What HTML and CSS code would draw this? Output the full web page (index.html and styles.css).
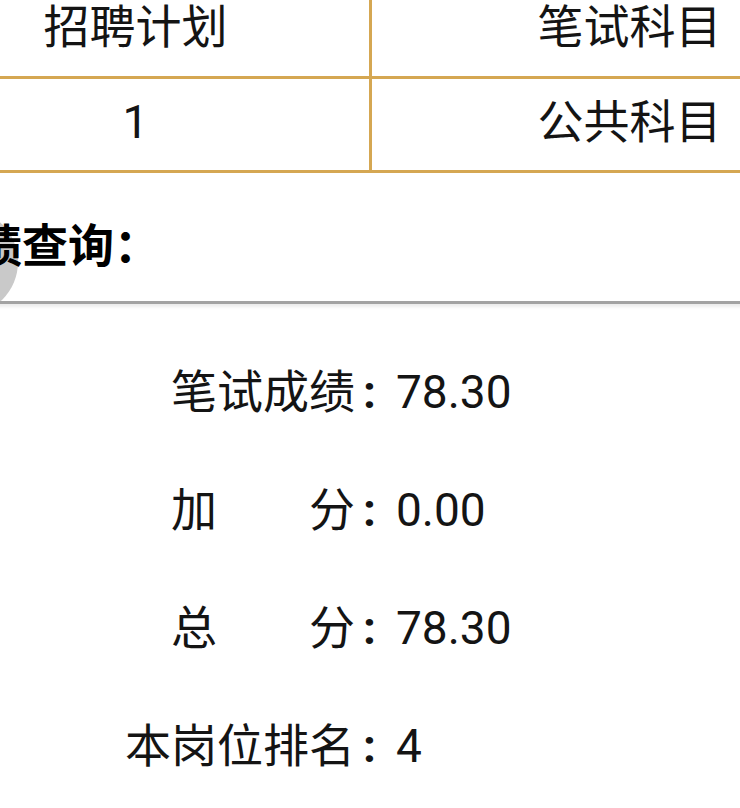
FILE: index.html
```html
<!DOCTYPE html>
<html lang="zh-CN">
<head>
<meta charset="utf-8">
<title>成绩查询</title>
<link rel="stylesheet" href="styles.css">
</head>
<body>
<div class="sheet">
  <table class="plan-table">
    <tr class="plan-head">
      <td class="col-plan">招聘计划</td>
      <td class="col-subject">笔试科目</td>
    </tr>
    <tr class="plan-row">
      <td class="col-plan">1</td>
      <td class="col-subject">公共科目</td>
    </tr>
  </table>

  <section class="query-head">
    <span class="float-btn"></span>
    <h2 class="query-title">成绩查询：</h2>
  </section>

  <ul class="scores">
    <li class="score-row"><span class="label">笔试成绩</span><span class="colon">:</span><span class="value">78.30</span></li>
    <li class="score-row"><span class="label">加　　分</span><span class="colon">:</span><span class="value">0.00</span></li>
    <li class="score-row"><span class="label">总　　分</span><span class="colon">:</span><span class="value">78.30</span></li>
    <li class="score-row"><span class="label">本岗位排名</span><span class="colon">:</span><span class="value">4</span></li>
  </ul>
</div>
</body>
</html>
```

FILE: styles.css
```css
html, body {
  margin: 0;
  padding: 0;
  background: #ffffff;
  overflow: hidden;
}

body {
  width: 740px;
  height: 808px;
  font-family: Roboto, "Noto Sans CJK SC", sans-serif;
  color: #141414;
}

.sheet {
  margin: -21px 0 0 -101px;
  width: 1010px;
}

/* recruitment plan table */
.plan-table {
  border-collapse: collapse;
  border: 3px solid #d5a752;
  font-size: 46px;
  line-height: 1;
}

.plan-table td {
  border: 3px solid #d5a752;
  padding: 0;
  text-align: center;
  vertical-align: middle;
}

.col-plan {
  width: 470px;
}

.col-subject {
  width: 518px;
}

.plan-head td {
  height: 97px;
  padding-bottom: 4px;
  box-sizing: border-box;
}

.plan-row td {
  height: 94px;
  padding-bottom: 6px;
  box-sizing: border-box;
}

/* section heading */
.query-head {
  position: relative;
  overflow: hidden;
  height: 128px;
  border-bottom: 3px solid #a2a2a2;
  box-shadow: 0 3px 3px #ececec;
}

.float-btn {
  position: absolute;
  left: 13px;
  top: 36px;
  width: 106px;
  height: 106px;
  border-radius: 50%;
  background: #c9c9c9;
}

.query-title {
  position: relative;
  margin: 0;
  padding: 46px 0 0 31px;
  font-size: 46px;
  line-height: 46px;
  font-weight: 700;
  color: #000;
  font-family: "Noto Sans CJK SC", sans-serif;
}

/* score list */
.scores {
  list-style: none;
  margin: 0;
  padding: 61px 0 0 226px;
  display: flex;
  flex-direction: column;
  gap: 68px;
  font-size: 46px;
  line-height: 46px;
}

.score-row {
  display: flex;
  align-items: baseline;
}

.label {
  width: 5em;
  text-align: right;
  font-family: "Noto Sans CJK SC", sans-serif;
}

.colon {
  padding: 0 20px 0 8px;
  font-weight: 700;
  font-family: Roboto, sans-serif;
}

.value {
  font-family: Roboto, sans-serif;
}
```
